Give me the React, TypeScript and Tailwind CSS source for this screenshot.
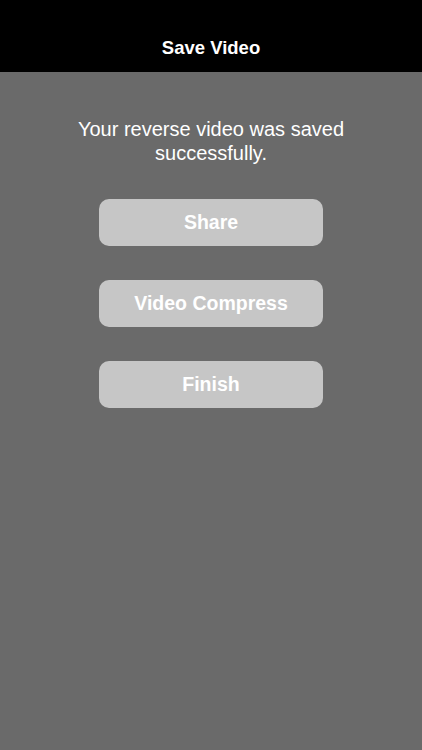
export default function App() {
  const buttons = ["Share", "Video Compress", "Finish"];

  return (
    <div
      className="flex min-h-[750px] flex-col bg-[#6a6a6a]"
      style={{ fontFamily: '"Liberation Sans", Arial, sans-serif' }}
    >
      <header className="flex h-[72px] items-center justify-center bg-black pt-[24px]">
        <h1 className="text-[18.5px] font-bold text-white">Save Video</h1>
      </header>

      <main className="flex flex-col items-center">
        <p className="mt-[45px] text-center text-[20px] leading-[24px] text-white">
          Your reverse video was saved
          <br />
          successfully.
        </p>

        <div className="mt-[34px] flex flex-col gap-[34px]">
          {buttons.map((label) => (
            <button
              key={label}
              type="button"
              className="h-[47px] w-[224px] rounded-[10px] bg-[#c6c6c6] text-[19.5px] font-bold text-white"
            >
              {label}
            </button>
          ))}
        </div>
      </main>
    </div>
  );
}
